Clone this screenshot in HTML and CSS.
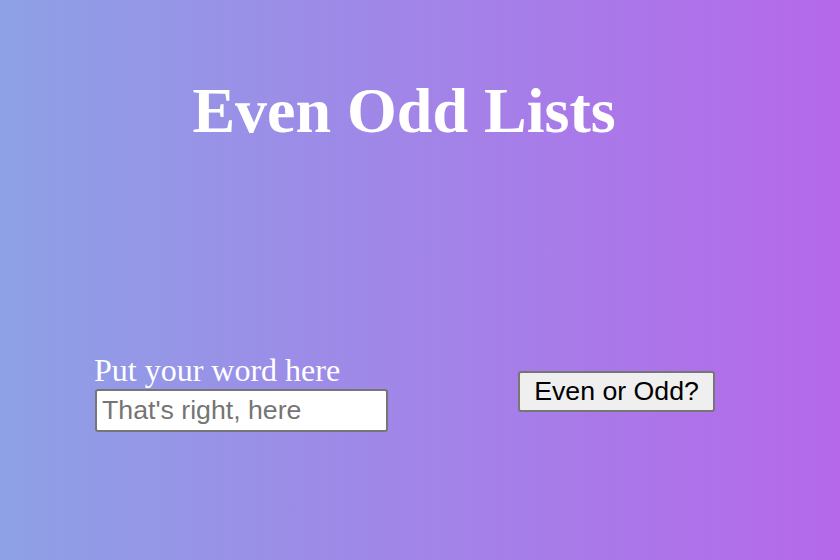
FILE: index.html
```html
<!DOCTYPE html>
<html>
<head>
<meta charset="utf-8">
<link rel="stylesheet" href="styles.css">
</head>
<body>
<h1 class="title">Even Odd Lists</h1>
<div class="row">
  <div class="field">
    <label class="label" for="word">Put your word here</label>
    <input class="input" id="word" type="text" placeholder="That's right, here">
  </div>
  <button class="btn">Even or Odd?</button>
</div>
</body>
</html>
```
FILE: styles.css
```css
html, body {
  margin: 0;
  height: 100%;
}
body {
  background: linear-gradient(to right, #8ea1e6, #b568ea);
  font-family: "Liberation Serif", serif;
  color: #fff;
}
.title {
  margin: 0;
  padding-top: 74px;
  padding-right: 32px;
  text-align: center;
  font-size: 64px;
  font-weight: bold;
  line-height: 74px;
}
.row {
  display: flex;
  align-items: flex-start;
  padding-top: 203px;
  padding-left: 94px;
  gap: 130px;
}
.field {
  display: flex;
  flex-direction: column;
}
.label {
  font-size: 32px;
  line-height: 38px;
}
.input {
  box-sizing: border-box;
  width: 293px;
  height: 43px;
  margin-left: 1px;
  padding: 0 5px;
  border: 2px solid #767676;
  border-radius: 3px;
  background: #fff;
  font-family: "Liberation Sans", sans-serif;
  font-size: 26.7px;
  color: #000;
}
.input::placeholder {
  color: #757575;
}
.btn {
  box-sizing: border-box;
  margin-top: 20px;
  width: 197px;
  height: 41px;
  border: 2px solid #767676;
  border-radius: 3px;
  background: #efefef;
  font-family: "Liberation Sans", sans-serif;
  font-size: 26.7px;
  color: #000;
  padding: 0;
}
```
